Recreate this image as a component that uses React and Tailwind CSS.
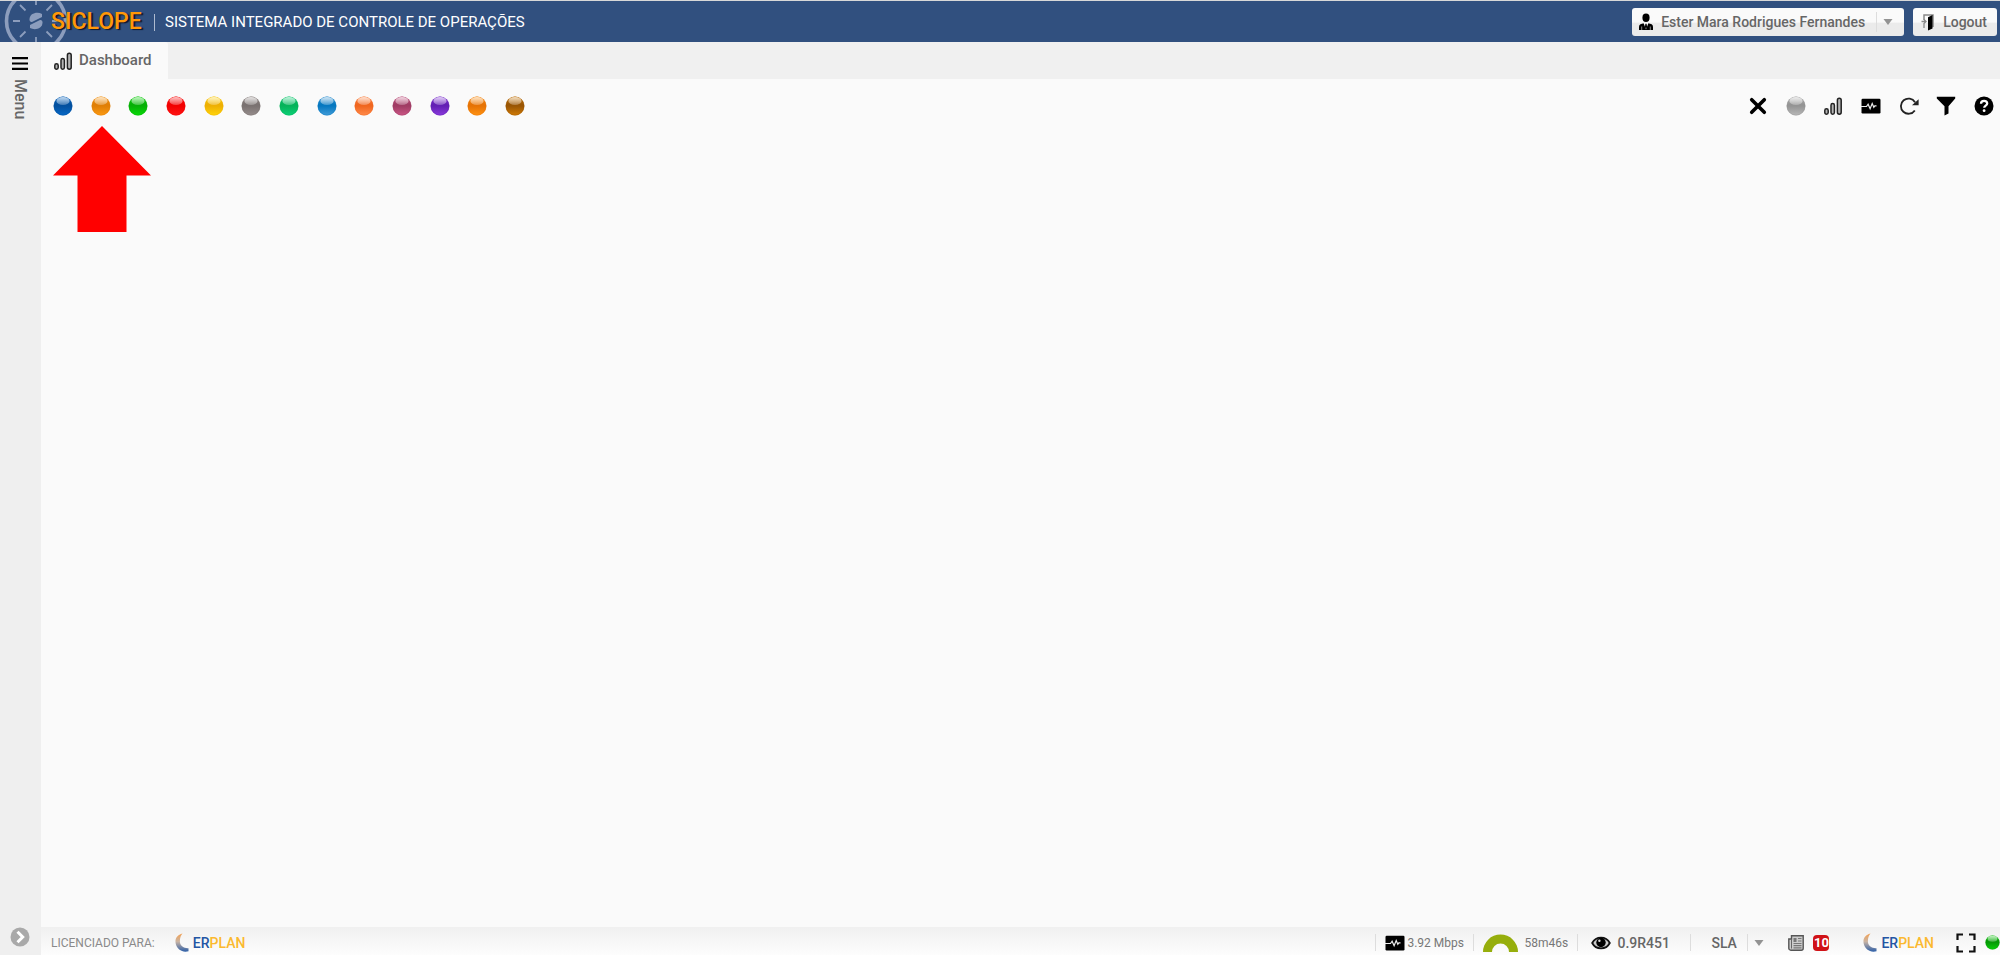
import React from "react";

const statuses = [
  { name: "Azul", dark: "#03509f", light: "#0768c6" },
  { name: "Laranja", dark: "#e07f06", light: "#fb9a14" },
  { name: "Verde", dark: "#06b006", light: "#08da08" },
  { name: "Vermelho", dark: "#f20000", light: "#ff1414" },
  { name: "Amarelo", dark: "#eeb003", light: "#ffd40a" },
  { name: "Cinza", dark: "#7a7271", light: "#968d8c" },
  { name: "Esmeralda", dark: "#06b35a", light: "#0cd077" },
  { name: "Celeste", dark: "#0678c0", light: "#429cd8" },
  { name: "Coral", dark: "#f0661f", light: "#ff8b4c" },
  { name: "Vinho", dark: "#a03c64", light: "#ca5685" },
  { name: "Roxo", dark: "#6320b4", light: "#8a3adc" },
  { name: "Abóbora", dark: "#e67305", light: "#ff9212" },
  { name: "Marrom", dark: "#995503", light: "#d07b06" },
];

function Ball({ id, dark, light, className = "size-5" }) {
  return (
    <svg viewBox="0 0 20 20" className={className} aria-hidden="true">
      <defs>
        <linearGradient id={`${id}-body`} x1="0" y1="0" x2="0" y2="1">
          <stop offset="0" stopColor={light} />
          <stop offset="0.4" stopColor={dark} />
          <stop offset="0.5" stopColor={dark} />
          <stop offset="1" stopColor={light} />
        </linearGradient>
        <linearGradient id={`${id}-gloss`} x1="0" y1="0" x2="0" y2="1">
          <stop offset="0" stopColor="#fff" stopOpacity="0.75" />
          <stop offset="1" stopColor="#fff" stopOpacity="0.25" />
        </linearGradient>
      </defs>
      <circle cx="10" cy="10" r="9.4" fill={`url(#${id}-body)`} />
      <circle cx="10" cy="10" r="9.1" fill="none" stroke={dark} strokeOpacity="0.6" strokeWidth="0.6" />
      <ellipse cx="10" cy="5" rx="6.6" ry="4" fill={`url(#${id}-gloss)`} />
    </svg>
  );
}

function BarsIcon() {
  return (
    <svg viewBox="0 0 20 20" className="size-5" fill="#b5b5b5" stroke="#222" strokeWidth="1.5" aria-hidden="true">
      <rect x="1.8" y="12.800" width="3.400" height="5.400" rx="1.700" />
      <rect x="8" y="7.500" width="3.400" height="10.700" rx="1.700" />
      <rect x="14.400" y="2.300" width="3.800" height="15.900" rx="1.900" />
    </svg>
  );
}

function MonitorIcon() {
  return (
    <svg viewBox="0 0 20 20" className="size-5" aria-hidden="true">
      <rect x="0.5" y="2.800" width="19" height="14.600" rx="1.200" fill="#000" />
      <path d="M0 10.500h5.500l1.600-2.300 2 4.600 2.100-5.300 1.600 3.800 1-1.500h1.700" fill="none" stroke="#eee" strokeWidth="1.200" />
    </svg>
  );
}

function CloseIcon() {
  return (
    <svg viewBox="0 0 20 20" className="size-5" aria-hidden="true">
      <path d="M3.700 3.700l12.600 12.600M16.300 3.700L3.700 16.300" stroke="#000" strokeWidth="3.600" strokeLinecap="round" />
    </svg>
  );
}

function RefreshIcon() {
  return (
    <svg viewBox="0 0 20 20" className="size-5" aria-hidden="true">
      <path d="M15.800 14.400A7.600 7.600 0 1 1 16 6.200" fill="none" stroke="#222" strokeWidth="1.800" />
      <path d="M19.600 3.200v6h-6.600z" fill="#222" />
    </svg>
  );
}

function FilterIcon() {
  return (
    <svg viewBox="0 0 20 20" className="size-5" aria-hidden="true">
      <path d="M0.800 0.800h18.400v1.800l-6.700 7.600v7.400l-4 2V10.200L0.800 2.600z" fill="#000" />
    </svg>
  );
}

function HelpIcon() {
  return (
    <svg viewBox="0 0 20 20" className="size-5" aria-hidden="true">
      <circle cx="10" cy="10" r="9.5" fill="#000" />
      <path d="M7 7.800c0-4 6.200-3.800 6.200-.4 0 2.200-3 2.200-3 4.400" fill="none" stroke="#fff" strokeWidth="2.300" />
      <circle cx="10.100" cy="14.700" r="1.400" fill="#fff" />
    </svg>
  );
}

function UserIcon() {
  return (
    <svg viewBox="0 0 16 18" className="h-[18px] w-4" aria-hidden="true">
      <ellipse cx="8" cy="4.800" rx="3.600" ry="4.200" fill="#000" />
      <path d="M1 17V13.800c0-2.400 2-3.200 5-3.600h4c3 .4 5 1.200 5 3.600V17z" fill="#000" />
      <path d="M5.600 10l2.400 6.500 2.400-6.500z" fill="#fff" />
      <path d="M7.400 10.800h1.200l.5 3.200L8 16l-1.100-2z" fill="#000" />
      <path d="M3.700 13.500V17M12.300 13.500V17" stroke="#ddd" strokeWidth="0.600" />
    </svg>
  );
}

function DoorIcon() {
  return (
    <svg viewBox="0 0 16 18" className="h-[18px] w-4" aria-hidden="true">
      <path d="M4 7V2h9v12" fill="none" stroke="#888" strokeWidth="1.500" />
      <path d="M8 4.300L12.500 2v13.500L8 17.500z" fill="#000" />
      <path d="M1.500 8.500h4.500M4 6.500l2 2-2 2M4 10v5" fill="none" stroke="#888" strokeWidth="1.300" />
    </svg>
  );
}

function Emblem() {
  return (
    <svg viewBox="0 0 64 41" className="h-[41px] w-16" fill="none" stroke="#8c9dbd" aria-hidden="true">
      <circle cx="32" cy="20" r="29.500" strokeWidth="3.600" />
      <g strokeWidth="1.800">
        <path d="M9 20h7M48 20h7M32-3v7M32 36v7" />
        <path d="M16 4l5.500 5.500M42.500 30.500L48 36M16 36l5.500-5.500M42.500 9.500L48 4" />
      </g>
      <g stroke="none" fill="#8c9dbd">
        <path d="M38 13C33.500 10.500 25.500 12 25.500 18.500c0 2 1.300 2.900 3 2.200L38 16z" />
        <path d="M26 27c4.500 2.500 12.500 1 12.500-5.500 0-2-1.300-2.900-3-2.200L26 24z" />
      </g>
    </svg>
  );
}

function Caret() {
  return (
    <svg viewBox="0 0 10 6" className="h-[6px] w-[10px]" aria-hidden="true">
      <path d="M0.500 0h9L5 6z" fill="#939393" />
    </svg>
  );
}

function EyeIcon() {
  return (
    <svg viewBox="0 0 20 14" className="h-[14px] w-5" aria-hidden="true">
      <path d="M1.200 7C5-.2 15-.2 18.800 7 15 14.200 5 14.200 1.200 7z" fill="#ccc" stroke="#111" strokeWidth="1.800" />
      <circle cx="10" cy="6.500" r="4.700" fill="#000" />
      <circle cx="8.400" cy="4.800" r="1.200" fill="#ddd" />
    </svg>
  );
}

function NewsIcon() {
  return (
    <svg viewBox="0 0 16 16" className="size-4" aria-hidden="true">
      <path d="M3.500.8h11.700v12.400a2 2 0 0 1-2 2H2.800a2 2 0 0 1-2-2V4h2.700z" fill="#ccc" stroke="#555" strokeWidth="1.400" />
      <path d="M3.500 4v9.500" stroke="#666" />
      <rect x="5.500" y="3" width="3" height="4" fill="#777" />
      <path d="M10 3.500h3.500M10 6h3.500M5.500 8.500h8M5.500 10.700h8M5.500 12.900h8" stroke="#777" strokeWidth="1.200" />
    </svg>
  );
}

function ExpandIcon() {
  return (
    <svg viewBox="0 0 20 20" className="size-5" aria-hidden="true">
      <path d="M1.500 7V1.500H7M13 1.500h5.500V7M18.500 13v5.500H13M7 18.500H1.500V13" fill="none" stroke="#111" strokeWidth="2.200" />
    </svg>
  );
}

function ErplanLogo({ id }) {
  return (
    <span className="flex items-center gap-1 text-sm leading-5 font-medium">
      <svg viewBox="0 0 14 19" className="h-[19px] w-[14px]" aria-hidden="true">
        <defs>
          <linearGradient id={id} x1="0" y1="0" x2="0" y2="1">
            <stop offset="0" stopColor="#f4a050" />
            <stop offset="0.45" stopColor="#c9b4a4" />
            <stop offset="1" stopColor="#2d5fa8" />
          </linearGradient>
        </defs>
        <path d="M7.500 0.500C2 2-.5 6 .8 11c1.200 5 6.500 9 12.700 7.200v-3C9 15.500 5.500 13 5 9.500 4.600 6 5.500 2.500 7.500.5z" fill={`url(#${id})`} />
      </svg>
      <span className="text-[#2455a4]">
        ER<span className="text-[#fbb930]">PLAN</span>
      </span>
    </span>
  );
}

const tools = [
  { name: "Fechar", icon: <CloseIcon /> },
  { name: "Status", icon: <Ball id="neutral" dark="#949494" light="#b8b8b8" /> },
  { name: "Indicadores", icon: <BarsIcon /> },
  { name: "Monitor", icon: <MonitorIcon /> },
  { name: "Atualizar", icon: <RefreshIcon /> },
  { name: "Filtrar", icon: <FilterIcon /> },
  { name: "Ajuda", icon: <HelpIcon /> },
];

function Header() {
  return (
    <header className="flex h-[42px] items-center justify-between border-t border-[#d8d8d8] bg-[#31507f] pr-[3px]">
      <div className="flex items-center">
        <div className="w-[51px] pl-1">
          <Emblem />
        </div>
        <div className="relative flex items-center pt-[2px]">
          <h1 className="w-[93px] text-[23px] font-medium text-[#ff9808] [text-shadow:2px_1px_1px_#10182a]">SICLOPE</h1>
          <span className="mx-[10px] h-[17px] w-px bg-[#aebbd0]" />
          <p className="text-[15px] text-white">SISTEMA INTEGRADO DE CONTROLE DE OPERAÇÕES</p>
        </div>
      </div>
      <div className="flex gap-[9px] pt-px text-sm font-medium text-[#666]">
        <button className="flex h-7 items-center rounded-[3px] bg-linear-to-b from-[#fafafa] from-50% to-[#ebebeb] to-55% pr-[11px] pl-[6px]">
          <UserIcon />
          <span className="mr-[11px] ml-[7px]">Ester Mara Rodrigues Fernandes</span>
          <span className="mr-[6px] h-5 w-px bg-[#ddd]" />
          <Caret />
        </button>
        <button className="flex h-7 items-center gap-[7px] rounded-[3px] bg-linear-to-b from-[#fafafa] from-50% to-[#ebebeb] to-55% pr-[10px] pl-[7px]">
          <DoorIcon />
          Logout
        </button>
      </div>
    </header>
  );
}

function Sidebar() {
  return (
    <aside className="flex w-[41px] shrink-0 flex-col items-center justify-between bg-[#efefef] pt-[15px] pr-[2px] pb-2">
      <button className="flex flex-col items-center gap-[9px] text-base leading-4 font-medium text-[#666]">
        <svg viewBox="0 0 16 13" className="h-[13px] w-4" aria-hidden="true">
          <path d="M0 1.200h16M0 6.500h16M0 11.800h16" stroke="#000" strokeWidth="2.200" />
        </svg>
        <span className="[writing-mode:vertical-rl]">Menu</span>
      </button>
      <button aria-label="Expandir menu">
        <svg viewBox="0 0 20 20" className="size-5" aria-hidden="true">
          <circle cx="10" cy="10" r="9.500" fill="#a9a9a9" />
          <path d="M7.500 4.800l5.200 5.200-5.200 5.200" fill="none" stroke="#fff" strokeWidth="3" />
        </svg>
      </button>
    </aside>
  );
}

function Footer() {
  return (
    <footer className="flex h-7 items-center justify-between bg-linear-to-b from-[#f0f0f0] to-[#fdfdfd] pt-[3px] pl-[10px] text-xs text-[#777]">
      <div className="flex items-center gap-5">
        <span className="text-[#8a8a8a]">LICENCIADO PARA:</span>
        <ErplanLogo id="erplan-left" />
      </div>
      <div className="flex items-center">
        <div className="flex h-[17px] w-[98px] items-center gap-[2px] border-l border-[#ddd] pl-[9px]">
          <MonitorIcon />
          3.92 Mbps
        </div>
        <div className="flex h-[17px] w-[104px] items-center gap-[6px] border-l border-[#ddd] pl-[9px]">
          <svg viewBox="0 0 35 18" className="h-[18px] w-[35px]" aria-hidden="true">
            <path d="M0 18a17.500 17.500 0 0 1 35 0h-9a8.500 8.500 0 0 0-17 0z" fill="#96ae0c" />
          </svg>
          58m46s
        </div>
        <div className="flex h-[17px] w-[113px] items-center gap-[6px] border-l border-[#ddd] pl-[13px] text-sm font-medium text-[#666]">
          <EyeIcon />
          0.9R451
        </div>
        <button className="flex h-[17px] w-[98px] items-center border-l border-[#ddd] pl-5 text-sm font-medium text-[#666]">
          <span className="w-9 text-left">SLA</span>
          <span className="flex h-[17px] items-center border-l border-[#ddd] pl-[6px]">
            <Caret />
          </span>
        </button>
        <button className="flex w-[75px] items-center gap-[9px]" aria-label="Notícias: 10">
          <NewsIcon />
          <span className="flex size-4 items-center justify-center rounded-[4px] bg-[#d01217] text-[13px] leading-4 font-bold text-white">10</span>
        </button>
        <ErplanLogo id="erplan-right" />
        <button className="mr-[9px] ml-[22px]" aria-label="Tela cheia">
          <ExpandIcon />
        </button>
        <Ball id="online" dark="#069a06" light="#08d008" className="size-[15px]" />
      </div>
    </footer>
  );
}

export default function App() {
  return (
    <div className="flex min-h-screen flex-col bg-[#fafafa] font-[Roboto,sans-serif]">
      <Header />
      <div className="flex grow">
        <Sidebar />
        <div className="flex min-w-0 grow flex-col">
          <nav className="flex h-[37px] bg-[#f0f0f0]">
            <a href="#dashboard" className="flex items-center gap-[6px] rounded-tr-[3px] bg-[#fafafa] pr-4 pl-3 text-[15px] font-medium text-[#666]">
              <BarsIcon />
              Dashboard
            </a>
          </nav>
          <main className="grow">
            <div className="flex justify-between pt-[17px] pr-[6px] pl-3">
              <div className="relative flex w-[472px] justify-between">
                {statuses.map((s, i) => (
                  <button key={s.name} aria-label={s.name}>
                    <Ball id={`status-${i}`} dark={s.dark} light={s.light} />
                  </button>
                ))}
                <svg viewBox="0 0 98 106" className="absolute top-[30px] left-0 h-[106px] w-[98px]" aria-hidden="true">
                  <path d="M49 0l49 49.500H73.500V106h-49V49.500H0z" fill="#f00" />
                </svg>
              </div>
              <div className="flex w-[246px] justify-between">
                {tools.map((t) => (
                  <button key={t.name} aria-label={t.name}>
                    {t.icon}
                  </button>
                ))}
              </div>
            </div>
          </main>
          <Footer />
        </div>
      </div>
    </div>
  );
}
